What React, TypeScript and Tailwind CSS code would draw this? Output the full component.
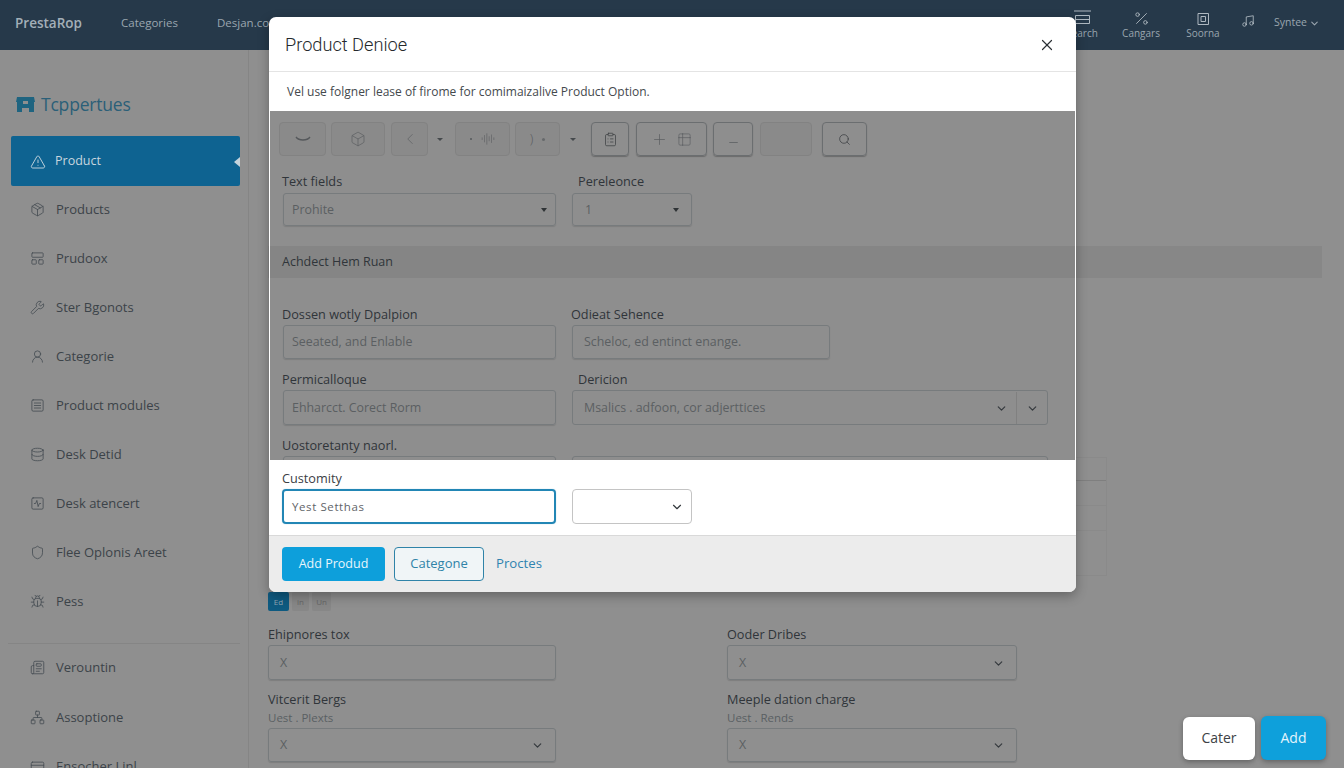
import React from "react";
import { X, ChevronDown, Search, Plus, Minus, TriangleAlert, Package, LayoutPanelTop, Wrench, UserRound, SquareMenu, Database, SquareActivity, Shield, Bug, Newspaper, Network, CreditCard, Percent, Music, Box, ChevronLeft, AudioLines, ClipboardList, Table2 } from "lucide-react";

const font = "font-['Open_Sans','Noto_Sans',sans-serif]";

const side = [
  { t: "Products", I: Package },
  { t: "Prudoox", I: LayoutPanelTop },
  { t: "Ster Bgonots", I: Wrench },
  { t: "Categorie", I: UserRound },
  { t: "Product modules", I: SquareMenu },
  { t: "Desk Detid", I: Database },
  { t: "Desk atencert", I: SquareActivity },
  { t: "Flee Oplonis Areet", I: Shield },
  { t: "Pess", I: Bug },
];
const side2 = [
  { t: "Verountin", I: Newspaper },
  { t: "Assoptione", I: Network },
  { t: "Ensocher Linl", I: CreditCard },
];

type IconT = React.ComponentType<{ size?: number; strokeWidth?: number; className?: string }>;

function SideRow({ t, I }: { t: string; I: IconT }) {
  return (
    <div className="flex h-[49px] items-center gap-[11px] pl-[30px] text-[13px] text-[#3c4349]">
      <I size={15} strokeWidth={1.3} className="shrink-0 text-[#454c52]" />
      <span>{t}</span>
    </div>
  );
}

function Field({ label, sub, value, select, caret, w, h = "h-[35px]", mt = "mt-[2px]", px = "px-[11px]", labelCls = "", inset = "", className = "" }: { label: string; sub?: string; value: string; select?: boolean; caret?: boolean; w: string; h?: string; mt?: string; px?: string; labelCls?: string; inset?: string; className?: string }) {
  return (
    <div className={className}>
      <div className={`${labelCls} h-[18px] text-[12.7px] leading-[18px] text-[#30353a]`}>{label}</div>
      {sub && <div className="mt-[1px] text-[11.5px] leading-[17px] text-[#5a5f63]">{sub}</div>}
      <div className={`${w} ${h} ${mt} ${px} ${inset} flex items-center justify-between rounded-[3px] border border-[#777b7d] pt-[1px] text-[12.4px] text-[#5b5f62] shadow-[0_1px_1px_rgba(0,0,0,0.12)]`}>
        <span>{value}</span>
        {select && <ChevronDown size={13} strokeWidth={2.2} className="text-[#34393d]" />}
        {caret && <span className="h-0 w-0 border-x-[3px] border-t-[4px] border-x-transparent border-t-[#2f3336]" />}
      </div>
    </div>
  );
}

function ToolBtn({ w, children, strong, className = "" }: { w: string; children?: React.ReactNode; strong?: boolean; className?: string }) {
  return (
    <div className={`${w} ${className} flex h-[34px] shrink-0 items-center justify-center gap-[9px] rounded-[4px] border ${strong ? "border-[#6b6e70] shadow-[0_1px_1px_rgba(0,0,0,0.25)]" : "border-[#828282] bg-[#8a8a8a]"} text-[#595c5f]`}>
      {children}
    </div>
  );
}

function Caret({ className }: { className: string }) {
  return <span className={`${className} h-0 w-0 shrink-0 border-x-[3px] border-t-[3px] border-x-transparent border-t-[#45494c]`} />;
}

export default function App() {
  return (
    <div className={`${font} relative flex h-[768px] w-[1344px] flex-col overflow-hidden bg-[#8f8f8f]`}>
      <header className="flex h-[50px] shrink-0 items-center bg-[#26394a] pb-[4px] pl-[15px] pr-[24px]">
        <span className="w-[106px] text-[13.5px] font-semibold text-[#a3afb8]">PrestaRop</span>
        <span className="w-[96px] text-[11.5px] text-[#9aa6af]">Categories</span>
        <span className="text-[11.5px] text-[#9aa6af]">Desjan.com</span>
        <div className="ml-auto flex items-center">
          <div className="flex w-[60px] flex-col items-center pt-[3px] text-[10px] leading-[12px] text-[#9aa6af]">
            <svg width="17" height="15" viewBox="0 0 17 15" fill="none" stroke="#aeb8c0" strokeWidth="1"><path d="M0 1h17M1.5 5.5h14v8h-14zM1.5 9.5h14" /></svg>
            <span className="mt-[2px]">Search</span>
          </div>
          <div className="ml-[-1px] flex w-[60px] flex-col items-center pt-[3px] text-[10px] leading-[12px] text-[#9aa6af]">
            <Percent size={17} strokeWidth={1.2} className="text-[#b6bfc6]" />
            <span>Cangars</span>
          </div>
          <div className="ml-[2px] flex w-[60px] flex-col items-center pt-[3px] text-[10px] leading-[12px] text-[#9aa6af]">
            <svg width="17" height="17" viewBox="0 0 17 17" fill="none" stroke="#aeb8c0" strokeWidth="1"><path d="M3 3.5h10.5v11H3zM6 6.5h4.5v5H6z" /></svg>
            <span>Soorna</span>
          </div>
          <Music size={14} strokeWidth={1.4} className="ml-[8px] mt-[-4px] text-[#b6bfc6]" />
          <div className="ml-[19px] flex w-[46px] items-center justify-between text-[10.5px] text-[#9aa6af]">
            Syntee <ChevronDown size={11} strokeWidth={2.4} />
          </div>
        </div>
      </header>

      <div className="flex min-h-0 flex-1">
        <aside className="w-[249px] shrink-0 border-r border-[#858585]">
          <div className="flex h-[86px] items-center gap-[6px] pl-[16px] pt-[22px]">
            <svg width="19" height="17" viewBox="0 0 19 17" fill="#1f6480"><path d="M1 1h17l1 5h-1v10h-5v-4H6v4H1V6H0zM7 5v3h5V5z" /></svg>
            <span className="text-[17.5px] tracking-[-0.2px] text-[#2b5f78]">Tcppertues</span>
          </div>
          <div className="relative ml-[11px] flex h-[50px] w-[229px] items-center gap-[9px] rounded-[2px] bg-[#0e6391] pl-[19px] pt-[1px] text-[12.5px] text-[#c7d6df]">
            <TriangleAlert size={16} strokeWidth={1.4} />
            <span>Product</span>
            <span className="absolute right-0 top-[21px] h-0 w-0 border-y-[5px] border-r-[6px] border-y-transparent border-r-[#c4d3dc]" />
          </div>
          <div className="-mt-[1px]">
            {side.map((r) => <SideRow key={r.t} {...r} />)}
          </div>
          <div className="mx-[8px] mt-[17px] border-t border-[#858585]" />
          <div className="-mt-[1px] [&>*:nth-child(2)]:mt-[1px]">
            {side2.map((r) => <SideRow key={r.t} {...r} />)}
          </div>
        </aside>

        <main className="relative min-w-0 flex-1 pl-[19px]">
          <div className="mr-[22px] mt-[196px] h-[32px] bg-[#878787]" />
          <div className="ml-[700px] mt-[179px] h-[119px] w-[139px] border border-[#8a8a8a]">
            <div className="mt-[22px] border-t border-[#7f7f7f]" />
            <div className="mt-[24px] border-t border-[#8a8a8a]" />
            <div className="mt-[24px] border-t border-[#8a8a8a]" />
          </div>
          <div className="mt-[16px] flex gap-[3px] text-[8px] leading-[19px]">
            <span className="h-[19px] w-[21px] rounded-[2px] bg-[#0e5a80] text-center text-[#8fa6b3]">Ed</span>
            <span className="h-[19px] w-[17px] rounded-[2px] bg-[#878787] text-center text-[#666]">in</span>
            <span className="h-[19px] w-[19px] rounded-[2px] bg-[#878787] text-center text-[#666]">Un</span>
          </div>
          <div className="mt-[14px] flex gap-[171px]">
            <Field w="w-[288px]" label="Ehipnores tox" value="X" />
            <Field w="w-[290px]" label="Ooder Dribes" value="X" select />
          </div>
          <div className="mt-[10px] flex gap-[171px]">
            <Field w="w-[288px]" h="h-[34px]" label="Vitcerit Bergs" sub="Uest . Plexts" value="X" select />
            <Field w="w-[290px]" h="h-[34px]" label="Meeple dation charge" sub="Uest . Rends" value="X" select />
          </div>
        </main>
      </div>

      <div className="absolute bottom-[8px] right-[18px] flex items-end gap-[6px]">
        <button className="h-[43px] w-[72px] rounded-[6px] bg-white pb-[2px] text-[14px] text-[#3d4246] shadow-[0_2px_5px_rgba(0,0,0,0.3)]">Cater</button>
        <button className="h-[44px] w-[65px] rounded-[6px] bg-[#0ea0db] pb-[2px] text-[14px] text-[#e4f4fb] shadow-[0_2px_5px_rgba(0,0,0,0.3)]">Add</button>
      </div>

      <div className="absolute left-[269px] top-[17px] flex h-[575px] w-[807px] flex-col overflow-hidden rounded-[7px] bg-white shadow-[0_4px_12px_rgba(0,0,0,0.3)]">
        <div className="flex h-[55px] shrink-0 items-center justify-between border-b border-[#e4e4e4] pl-[16px] pr-[20px] pt-[1px]">
          <span className="font-['Roboto',sans-serif] text-[18.2px] font-light text-[#25292c]">Product Denioe</span>
          <X size={18} strokeWidth={1.6} className="text-[#2c3135]" />
        </div>
        <div className="flex h-[39px] shrink-0 items-center pl-[18px] text-[12px] text-[#44494d]">Vel use folgner lease of firome for comimaizalive Product Option.</div>
        <div className="mx-[1px] h-[349px] shrink-0 overflow-hidden bg-[#8e8e8e]">
          <div className="flex items-center pl-[9px] pt-[11px]">
            <ToolBtn w="w-[47px]"><svg width="18" height="6" viewBox="0 0 18 6" fill="none" stroke="#55585b" strokeWidth="1.3"><path d="M2 1c3 4 11 4 14 0" /></svg></ToolBtn>
            <ToolBtn w="w-[54px]" className="ml-[5px]"><Box size={16} strokeWidth={1} /></ToolBtn>
            <ToolBtn w="w-[37px]" className="ml-[6px]"><ChevronLeft size={18} strokeWidth={0.9} /></ToolBtn>
            <Caret className="ml-[9px]" />
            <ToolBtn w="w-[55px]" className="ml-[12px]"><span className="h-[2px] w-[2px] rounded-full bg-[#55585b]" /><AudioLines size={14} strokeWidth={1} /></ToolBtn>
            <ToolBtn w="w-[45px]" className="ml-[5px]"><span className="text-[13px] font-light">)</span><span className="h-[3px] w-[3px] rounded-full bg-[#66696b]" /></ToolBtn>
            <Caret className="ml-[10px]" />
            <ToolBtn w="w-[38px]" strong className="ml-[15px]"><ClipboardList size={15} strokeWidth={1.2} className="text-[#3d4043]" /></ToolBtn>
            <ToolBtn w="w-[71px]" strong className="ml-[7px]"><Plus size={17} strokeWidth={1} /><Table2 size={15} strokeWidth={1} /></ToolBtn>
            <ToolBtn w="w-[40px]" strong className="ml-[6px]"><Minus size={13} strokeWidth={2.2} className="mt-[6px] text-[#66696b]" /></ToolBtn>
            <ToolBtn w="w-[52px]" className="ml-[7px]" />
            <ToolBtn w="w-[45px]" strong className="ml-[10px]"><Search size={13} strokeWidth={1.4} className="text-[#3d4043]" /></ToolBtn>
          </div>
          <div className="mt-[16px] flex pl-[12px]">
            <Field w="w-[273px]" h="h-[33px]" mt="mt-[3px]" px="px-[8px]" inset="ml-[1px]" className="w-[289px]" label="Text fields" value="Prohite" caret />
            <Field w="w-[120px]" h="h-[33px]" mt="mt-[3px]" px="px-[12px]" inset="ml-[1px]" labelCls="pl-[7px]" label="Pereleonce" value="1" caret />
          </div>
          <div className="mt-[20px] flex h-[32px] items-center bg-[#858585] pl-[12px] text-[12.5px] text-[#30353a]">Achdect Hem Ruan</div>
          <div className="mt-[27px] flex pl-[12px]">
            <Field w="w-[273px]" h="h-[34px]" px="px-[8px]" inset="ml-[1px]" className="w-[289px]" label="Dossen wotly Dpalpion" value="Seeated, and Enlable" />
            <Field w="w-[258px]" h="h-[34px]" inset="ml-[1px]" label="Odieat Sehence" value="Scheloc, ed entinct enange." />
          </div>
          <div className="mt-[11px] flex pl-[12px]">
            <Field w="w-[273px]" px="px-[8px]" inset="ml-[1px]" className="w-[289px]" label="Permicalloque" value="Ehharcct. Corect Rorm" />
            <div>
              <div className="h-[18px] pl-[7px] text-[12.7px] leading-[18px] text-[#30353a]">Dericion</div>
              <div className="ml-[1px] mt-[2px] flex h-[35px] w-[476px] items-center rounded-[3px] border border-[#777b7d] pl-[11px] pt-[1px] text-[12.4px] text-[#5b5f62]">
                <span className="flex-1">Msalics . adfoon, cor adjerttices</span>
                <ChevronDown size={13} strokeWidth={2.2} className="mr-[8px] text-[#34393d]" />
                <span className="flex h-full w-[31px] items-center justify-center border-l border-[#808080]"><ChevronDown size={13} strokeWidth={2.2} className="text-[#34393d]" /></span>
              </div>
            </div>
          </div>
          <div className="mt-[11px] flex pl-[12px]">
            <Field w="w-[273px]" inset="ml-[1px]" className="w-[289px]" label="Uostoretanty naorl." value="" />
            <Field w="w-[476px]" inset="ml-[1px]" label="" value="" />
          </div>
        </div>
        <div className="flex h-[76px] shrink-0 flex-col border-b border-[#d9d9d9] pl-[13px] pt-[9px]">
          <div className="h-[18px] text-[12.7px] leading-[18px] text-[#3b4044]">Customity</div>
          <div className="mt-[2px] flex gap-[16px]">
            <div className="flex h-[35px] w-[274px] items-center rounded-[4px] border-2 border-[#2286b5] px-[8px] text-[11.5px] tracking-[0.6px] text-[#5f6468] shadow-[0_0_1px_rgba(34,134,181,0.5)]">Yest Setthas</div>
            <div className="flex h-[35px] w-[120px] items-center justify-end rounded-[4px] border border-[#c4c4c4] pr-[7px]"><ChevronDown size={14} strokeWidth={2} className="text-[#34393d]" /></div>
          </div>
        </div>
        <div className="flex flex-1 items-start gap-[9px] bg-[#ececec] pl-[13px] pt-[11px] text-[13px]">
          <button className="h-[34px] w-[103px] rounded-[4px] bg-[#0d9fdb] text-[12.5px] text-[#e8f6fc]">Add Produd</button>
          <button className="h-[34px] w-[90px] rounded-[4px] border border-[#2f83a8] bg-[#f0f5f7] text-[#2f83a8]">Categone</button>
          <span className="ml-[3px] mt-[7px] text-[13.2px] text-[#2f83b0]">Proctes</span>
        </div>
      </div>
    </div>
  );
}
